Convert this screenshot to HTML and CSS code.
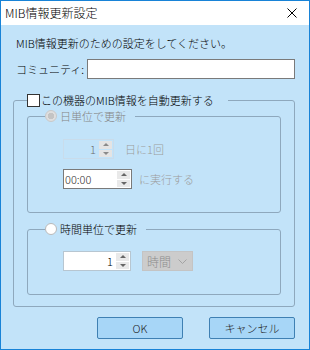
FILE: index.html
```html
<!DOCTYPE html>
<html lang="ja">
<head>
    <meta charset="UTF-8">
    <title>MIB情報更新設定</title>
    <link rel="stylesheet" href="styles.css">
</head>
<body>
    <div class="dialog">
        <div class="titlebar">
            <span class="title">MIB情報更新設定</span>
            <svg class="close" width="10" height="10" viewBox="0 0 10 10">
                <path d="M0.5 0.5 L9.5 9.5 M9.5 0.5 L0.5 9.5" stroke="#000" stroke-width="1" fill="none"/>
            </svg>
        </div>
        <div class="content">
            <p class="intro">MIB情報更新のための設定をしてください。</p>
            <div class="community">
                <label class="community-label">コミュニティ:</label>
                <input class="text-input" type="text">
            </div>
            <fieldset class="group outer">
                <legend class="legend-check"><span class="checkbox"></span>この機器のMIB情報を自動更新する</legend>
                <fieldset class="group inner">
                    <legend class="legend-radio disabled"><span class="radio radio-disabled"></span>日単位で更新</legend>
                    <div class="rows rows-day">
                        <div class="row">
                            <div class="spin spin-day spin-disabled">
                                <span class="spin-value">1</span>
                                <span class="spin-buttons"><span class="spin-btn"><i class="arrow up"></i></span><span class="spin-btn"><i class="arrow down"></i></span></span>
                            </div>
                            <span class="row-label disabled-light">日に1回</span>
                        </div>
                        <div class="row">
                            <div class="spin spin-time">
                                <span class="spin-value left">00:00</span>
                                <span class="spin-buttons"><span class="spin-btn"><i class="arrow up"></i></span><span class="spin-btn"><i class="arrow down"></i></span></span>
                            </div>
                            <span class="row-label label-run disabled-light">に実行する</span>
                        </div>
                    </div>
                </fieldset>
                <fieldset class="group inner hourly">
                    <legend class="legend-radio"><span class="radio"></span>時間単位で更新</legend>
                    <div class="rows rows-hour">
                        <div class="row">
                            <div class="spin spin-hour">
                                <span class="spin-value">1</span>
                                <span class="spin-buttons"><span class="spin-btn"><i class="arrow up"></i></span><span class="spin-btn"><i class="arrow down"></i></span></span>
                            </div>
                            <div class="combo">
                                <span>時間</span>
                                <svg width="9" height="5" viewBox="0 0 9 5">
                                    <path d="M0.5 0.5 L4.5 4.5 L8.5 0.5" stroke="#a3a3a3" stroke-width="1" fill="none"/>
                                </svg>
                            </div>
                        </div>
                    </div>
                </fieldset>
            </fieldset>
            <div class="buttons">
                <button class="btn">OK</button>
                <button class="btn">キャンセル</button>
            </div>
        </div>
    </div>
</body>
</html>
```

FILE: styles.css
```css
* {
    box-sizing: border-box;
}
body {
    margin: 0;
    font-family: "Noto Sans CJK JP", "Noto Sans", sans-serif;
    font-size: 11px;
    font-weight: 300;
    color: #000;
}
.dialog {
    width: 310px;
    height: 350px;
    border: 1px solid #1883d7;
    background-color: #c2e3f9;
    display: flex;
    flex-direction: column;
}
.titlebar {
    height: 24px;
    flex: none;
    background-color: #fff;
    display: flex;
    align-items: center;
    justify-content: space-between;
    padding: 0 12px 0 4px;
}
.title {
    font-size: 12px;
    line-height: 16px;
}
.content {
    padding: 10px 14px 0 12px;
    display: flex;
    flex-direction: column;
}
.intro {
    margin: 0;
    padding-left: 3px;
    line-height: 16px;
}
.community {
    margin-top: 8px;
    height: 20px;
    display: flex;
    align-items: center;
}
.community-label {
    width: 74px;
    flex: none;
    padding-left: 3px;
}
.text-input {
    flex: 1;
    min-width: 0;
    height: 20px;
    margin: 0;
    border: 1px solid #7a7a7a;
    background-color: #fff;
    outline: none;
}

/* group boxes */
.group {
    margin: 0;
    min-width: 0;
    border: 1px solid #8ea8bd;
    border-radius: 3px;
}
.outer {
    margin-top: 14px;
    padding: 2px 13px 11px 13px;
}
.inner {
    padding: 0 13px 0 17px;
}
.hourly {
    margin-top: 9px;
}
.legend-check,
.legend-radio {
    display: flex;
    align-items: center;
    height: 14px;
    line-height: 14px;
    padding: 0 14px 0 0;
}
.legend-radio {
    padding-right: 9px;
}
.checkbox {
    width: 13px;
    height: 13px;
    margin-right: 1px;
    border: 1px solid #333;
    background-color: #fff;
}
.radio {
    width: 12px;
    height: 12px;
    margin-right: 3px;
    border-radius: 50%;
    border: 1px solid #b9b9b9;
    background-color: #fff;
}
.radio-disabled {
    border-color: #c9c9c9;
    background: radial-gradient(circle, #c4c4c4 0 3px, #dedede 3.5px);
}
.disabled {
    color: #858585;
}
.disabled-light {
    color: #9c9c9c;
}

/* rows */
.rows {
    padding-left: 18px;
    display: flex;
    flex-direction: column;
    gap: 10px;
}
.rows-day {
    padding-top: 16px;
    padding-bottom: 23px;
}
.rows-hour {
    padding-top: 15px;
    padding-bottom: 23px;
}
.row {
    display: flex;
    align-items: center;
    gap: 11px;
}
.row .label-run {
    margin-left: -4px;
}

/* spinners */
.spin {
    height: 20px;
    display: flex;
    border: 1px solid #a9a9a9;
    background-color: #fff;
}
.spin-day {
    width: 51px;
}
.spin-time {
    width: 69px;
    border-color: #7a7a7a;
}
.spin-hour {
    width: 68px;
    border-color: #b7c6d1;
}
.spin-disabled {
    border-color: #c9dceb;
    background-color: #c2e3f9;
    color: #6d6d6d;
}
.spin-value {
    flex: 1;
    text-align: right;
    line-height: 18px;
    padding-right: 2px;
}
.spin-value.left {
    text-align: left;
    padding-left: 1px;
    color: #333;
}
.spin-buttons {
    width: 15px;
    display: flex;
    flex-direction: column;
    gap: 1px;
    padding: 1px;
}
.spin-btn {
    flex: 1;
    display: flex;
    align-items: center;
    justify-content: center;
    background-color: #e9e9e9;
}
.spin-disabled .spin-btn {
    background-color: #e4e4e4;
}
.arrow {
    width: 0;
    height: 0;
    border-left: 3px solid transparent;
    border-right: 3px solid transparent;
}
.arrow.up {
    border-bottom: 3px solid #666;
}
.arrow.down {
    border-top: 3px solid #666;
}
.spin-disabled .arrow.up {
    border-bottom-color: #8a8a8a;
}
.spin-disabled .arrow.down {
    border-top-color: #8a8a8a;
}

.combo {
    width: 51px;
    height: 20px;
    display: flex;
    align-items: center;
    justify-content: space-between;
    padding: 0 5px 0 4px;
    background-color: #cccccc;
    border: 1px solid #c4c4c4;
    color: #8c8c8c;
    font-size: 12px;
}

/* buttons */
.buttons {
    margin-top: 10px;
    display: flex;
    justify-content: flex-end;
    gap: 26px;
}
.btn {
    width: 86px;
    height: 22px;
    margin: 0;
    padding: 0;
    font-family: inherit;
    font-size: 11px;
    font-weight: 300;
    color: #222;
    background-color: #a7d6f7;
    border: 1px solid #3f80b3;
    border-radius: 2px;
}
```
